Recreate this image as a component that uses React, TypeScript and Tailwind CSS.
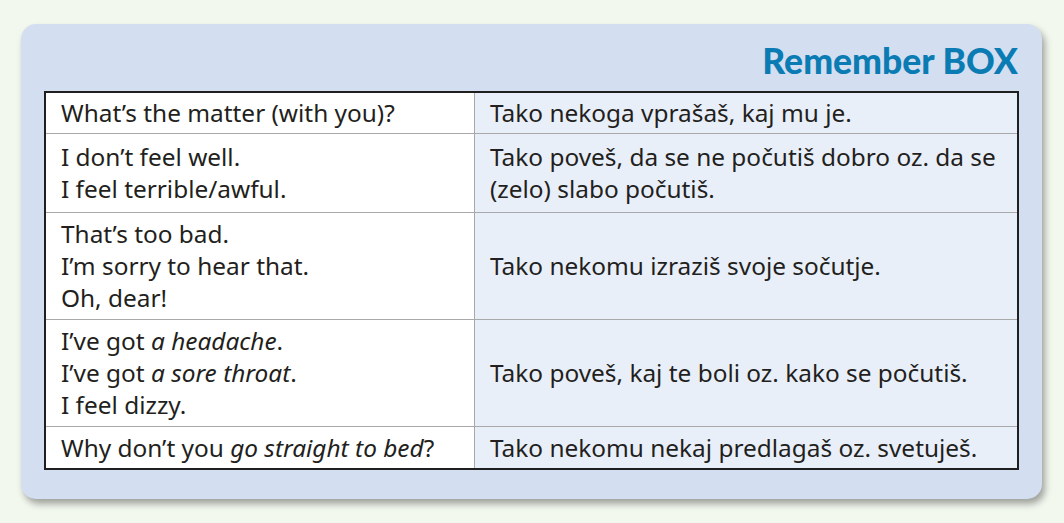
const rows: { en: React.ReactNode[]; sl: React.ReactNode[]; h: string }[] = [
  { en: ["What’s the matter (with you)?"], sl: ["Tako nekoga vprašaš, kaj mu je."], h: "h-[40px]" },
  {
    en: ["I don’t feel well.", "I feel terrible/awful."],
    sl: ["Tako poveš, da se ne počutiš dobro oz. da se", "(zelo) slabo počutiš."],
    h: "h-[79px]",
  },
  {
    en: ["That’s too bad.", "I’m sorry to hear that.", "Oh, dear!"],
    sl: ["Tako nekomu izraziš svoje sočutje."],
    h: "h-[107px]",
  },
  {
    en: [
      <>I’ve got <i>a headache</i>.</>,
      <>I’ve got <i>a sore throat</i>.</>,
      "I feel dizzy.",
    ],
    sl: ["Tako poveš, kaj te boli oz. kako se počutiš."],
    h: "h-[107px]",
  },
  {
    en: [<>Why don’t you <i>go straight to bed</i>?</>],
    sl: ["Tako nekomu nekaj predlagaš oz. svetuješ."],
    h: "h-[42px]",
  },
];

export default function App() {
  return (
    <div className="h-[523px] w-[1064px] bg-[#f3f8ef] pl-[21px] pt-[24px]">
      <div className="w-[1021px] rounded-[15px] bg-[#d3dff0] px-[23px] pb-[29px] pt-[14px] shadow-[3px_5px_7px_rgba(0,0,0,0.35)]">
        <div
          className="pb-[7px] pr-[1px] text-right text-[35.5px] font-black leading-[46px] text-[#0b7cb3]"
          style={{ fontFamily: "Lato, 'DejaVu Sans', sans-serif" }}
        >
          Remember BOX
        </div>

        <div
          className="border-2 border-[#1f1f1f] text-[24.4px] leading-[32px] text-[#231f20]"
          style={{ fontFamily: "'Noto Sans', Lato, sans-serif" }}
        >
          {rows.map((r, i) => (
            <div
              key={i}
              className={`grid grid-cols-[428px_1fr] ${r.h} ${i > 0 ? "border-t border-[#a9a9a9]" : ""}`}
            >
              <div className="flex flex-col justify-center bg-white pl-[15px]">
                {r.en.map((l, j) => (
                  <div key={j}>{l}</div>
                ))}
              </div>
              <div className="flex flex-col justify-center border-l border-[#a9a9a9] bg-[#e9eff9] pl-[15px]">
                {r.sl.map((l, j) => (
                  <div key={j}>{l}</div>
                ))}
              </div>
            </div>
          ))}
        </div>
      </div>
    </div>
  );
}
